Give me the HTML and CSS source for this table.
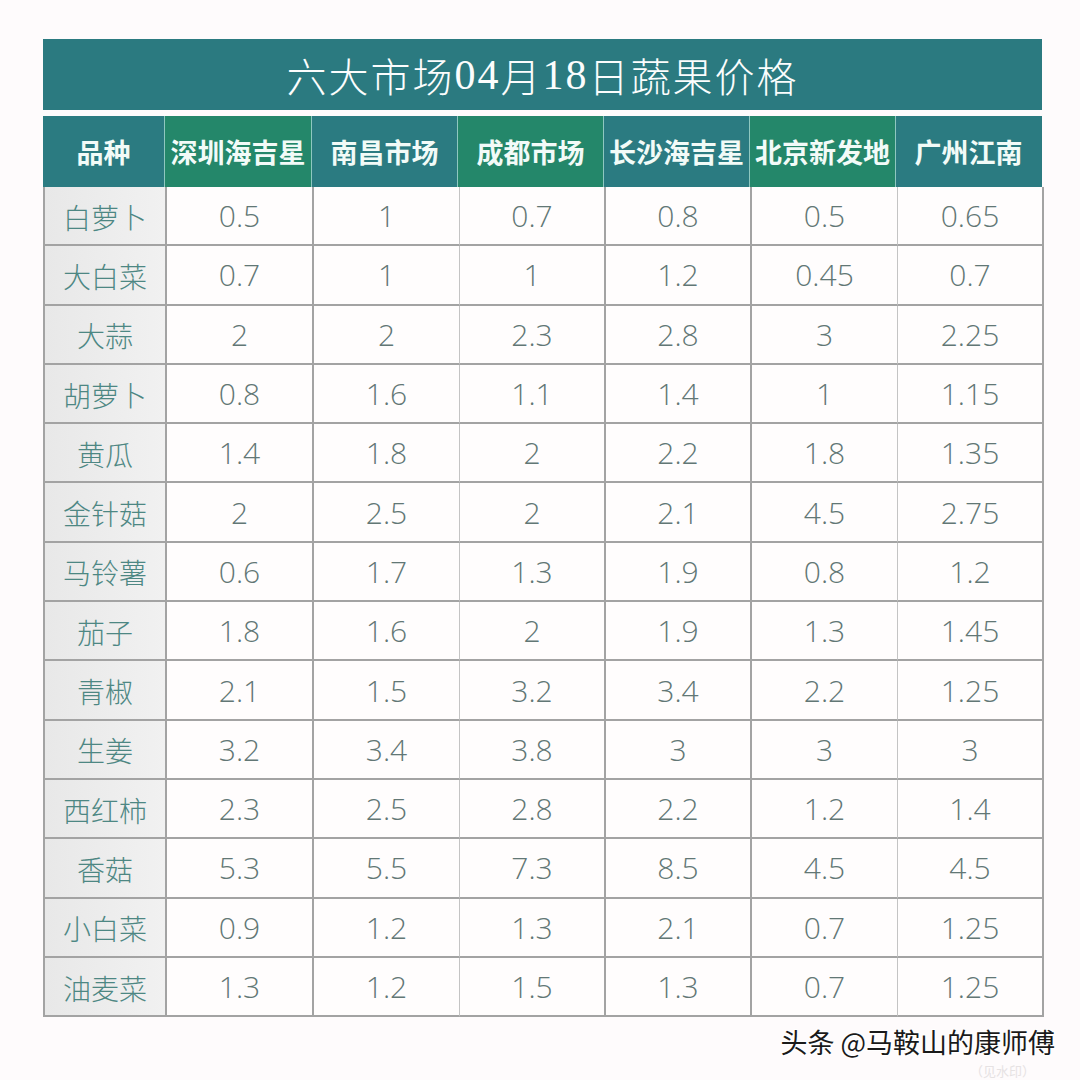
FILE: index.html
```html
<!DOCTYPE html>
<html lang="zh-CN">
<head>
<meta charset="utf-8">
<title>六大市场04月18日蔬果价格</title>
<link rel="stylesheet" href="styles.css">
</head>
<body>
<div class="page">
  <div class="sheet">
    <div class="title"><span class="cjk">六大市场</span><span class="num">04</span><span class="cjk">月</span><span class="num">18</span><span class="cjk">日蔬果价格</span></div>
    <div class="grid head">
      <div class="hc teal">品种</div>
      <div class="hc green">深圳海吉星</div>
      <div class="hc teal">南昌市场</div>
      <div class="hc green">成都市场</div>
      <div class="hc teal">长沙海吉星</div>
      <div class="hc green">北京新发地</div>
      <div class="hc teal">广州江南</div>
    </div>
    <div class="grid body">
      <div class="name">白萝卜</div><div class="v">0.5</div><div class="v">1</div><div class="v">0.7</div><div class="v">0.8</div><div class="v">0.5</div><div class="v">0.65</div>
      <div class="name">大白菜</div><div class="v">0.7</div><div class="v">1</div><div class="v">1</div><div class="v">1.2</div><div class="v">0.45</div><div class="v">0.7</div>
      <div class="name">大蒜</div><div class="v">2</div><div class="v">2</div><div class="v">2.3</div><div class="v">2.8</div><div class="v">3</div><div class="v">2.25</div>
      <div class="name">胡萝卜</div><div class="v">0.8</div><div class="v">1.6</div><div class="v">1.1</div><div class="v">1.4</div><div class="v">1</div><div class="v">1.15</div>
      <div class="name">黄瓜</div><div class="v">1.4</div><div class="v">1.8</div><div class="v">2</div><div class="v">2.2</div><div class="v">1.8</div><div class="v">1.35</div>
      <div class="name">金针菇</div><div class="v">2</div><div class="v">2.5</div><div class="v">2</div><div class="v">2.1</div><div class="v">4.5</div><div class="v">2.75</div>
      <div class="name">马铃薯</div><div class="v">0.6</div><div class="v">1.7</div><div class="v">1.3</div><div class="v">1.9</div><div class="v">0.8</div><div class="v">1.2</div>
      <div class="name">茄子</div><div class="v">1.8</div><div class="v">1.6</div><div class="v">2</div><div class="v">1.9</div><div class="v">1.3</div><div class="v">1.45</div>
      <div class="name">青椒</div><div class="v">2.1</div><div class="v">1.5</div><div class="v">3.2</div><div class="v">3.4</div><div class="v">2.2</div><div class="v">1.25</div>
      <div class="name">生姜</div><div class="v">3.2</div><div class="v">3.4</div><div class="v">3.8</div><div class="v">3</div><div class="v">3</div><div class="v">3</div>
      <div class="name">西红柿</div><div class="v">2.3</div><div class="v">2.5</div><div class="v">2.8</div><div class="v">2.2</div><div class="v">1.2</div><div class="v">1.4</div>
      <div class="name">香菇</div><div class="v">5.3</div><div class="v">5.5</div><div class="v">7.3</div><div class="v">8.5</div><div class="v">4.5</div><div class="v">4.5</div>
      <div class="name">小白菜</div><div class="v">0.9</div><div class="v">1.2</div><div class="v">1.3</div><div class="v">2.1</div><div class="v">0.7</div><div class="v">1.25</div>
      <div class="name">油麦菜</div><div class="v">1.3</div><div class="v">1.2</div><div class="v">1.5</div><div class="v">1.3</div><div class="v">0.7</div><div class="v">1.25</div>
    </div>
  </div>
  <div class="mark">
    <span class="wm">头条 @马鞍山的康师傅</span>
    <span class="ghost">（见水印）</span>
  </div>
</div>
</body>
</html>
```

FILE: styles.css
```css
html, body {
  margin: 0;
  padding: 0;
  background: #fefbfc;
}
.page {
  width: 1080px;
  height: 1080px;
  padding: 39px 0 0 43px;
  box-sizing: border-box;
  position: relative;
  overflow: hidden;
}
.sheet {
  width: 999px;
}
.title {
  height: 71px;
  background: #2b7a80;
  color: #fbfdfd;
  display: flex;
  align-items: center;
  justify-content: center;
  font-size: 40px;
  letter-spacing: 2px;
  margin-bottom: 6px;
}
.title .cjk {
  font-family: "Noto Sans CJK SC", sans-serif;
  font-weight: 300;
}
.title .num {
  font-family: "Liberation Serif", serif;
  font-size: 42px;
}
.grid {
  display: grid;
  grid-template-columns: 122px 147px 146px 146px 146px 146px 146px;
}
.head {
  height: 71px;
}
.hc {
  display: flex;
  align-items: center;
  justify-content: center;
  font-family: "Noto Sans CJK SC", sans-serif;
  font-weight: 700;
  font-size: 27px;
  color: #f2fbf8;
  border-right: 1px solid #8fc7c0;
  white-space: nowrap;
  letter-spacing: 0;
}
.hc:last-child {
  border-right: 1px solid #2b7a80;
}
.teal {
  background: #2b7b81;
}
.green {
  background: #24876a;
}
.body {
  grid-auto-rows: 59.3px;
  border-left: 2px solid #a3a3a3;
}
.body > div {
  display: flex;
  align-items: center;
  justify-content: center;
  border-right: 2px solid #a3a3a3;
  border-bottom: 2px solid #a3a3a3;
  box-sizing: border-box;
}
.body .v:nth-child(7n+3),
.body .v:nth-child(7n+6) {
  border-right-width: 1px;
  border-right-color: #c4c4c4;
}
.name {
  background: linear-gradient(90deg, #e8e8e8, #f1f1f1);
  font-family: "Noto Sans CJK SC", sans-serif;
  font-weight: 300;
  font-size: 28px;
  color: #4d8783;
  padding-top: 2px;
}
.v {
  background: #fffdfd;
  font-family: "Open Sans", "Liberation Sans", sans-serif;
  font-weight: 300;
  font-size: 30px;
  color: #627775;
}
.mark {
  position: absolute;
  right: 25px;
  top: 1024px;
  text-align: right;
}
.wm {
  display: block;
  font-family: "Noto Sans CJK SC", sans-serif;
  font-size: 27px;
  color: #1a1a1a;
  text-shadow: 1px 1px 0 #ffffff, -1px -1px 0 #ffffff, 1px -1px 0 #fff, -1px 1px 0 #fff;
  line-height: 36px;
}
.ghost {
  display: block;
  margin-top: 3px;
  margin-right: 20px;
  font-family: "Noto Sans CJK SC", sans-serif;
  font-size: 13px;
  line-height: 15px;
  color: #e6e2e3;
}
```
